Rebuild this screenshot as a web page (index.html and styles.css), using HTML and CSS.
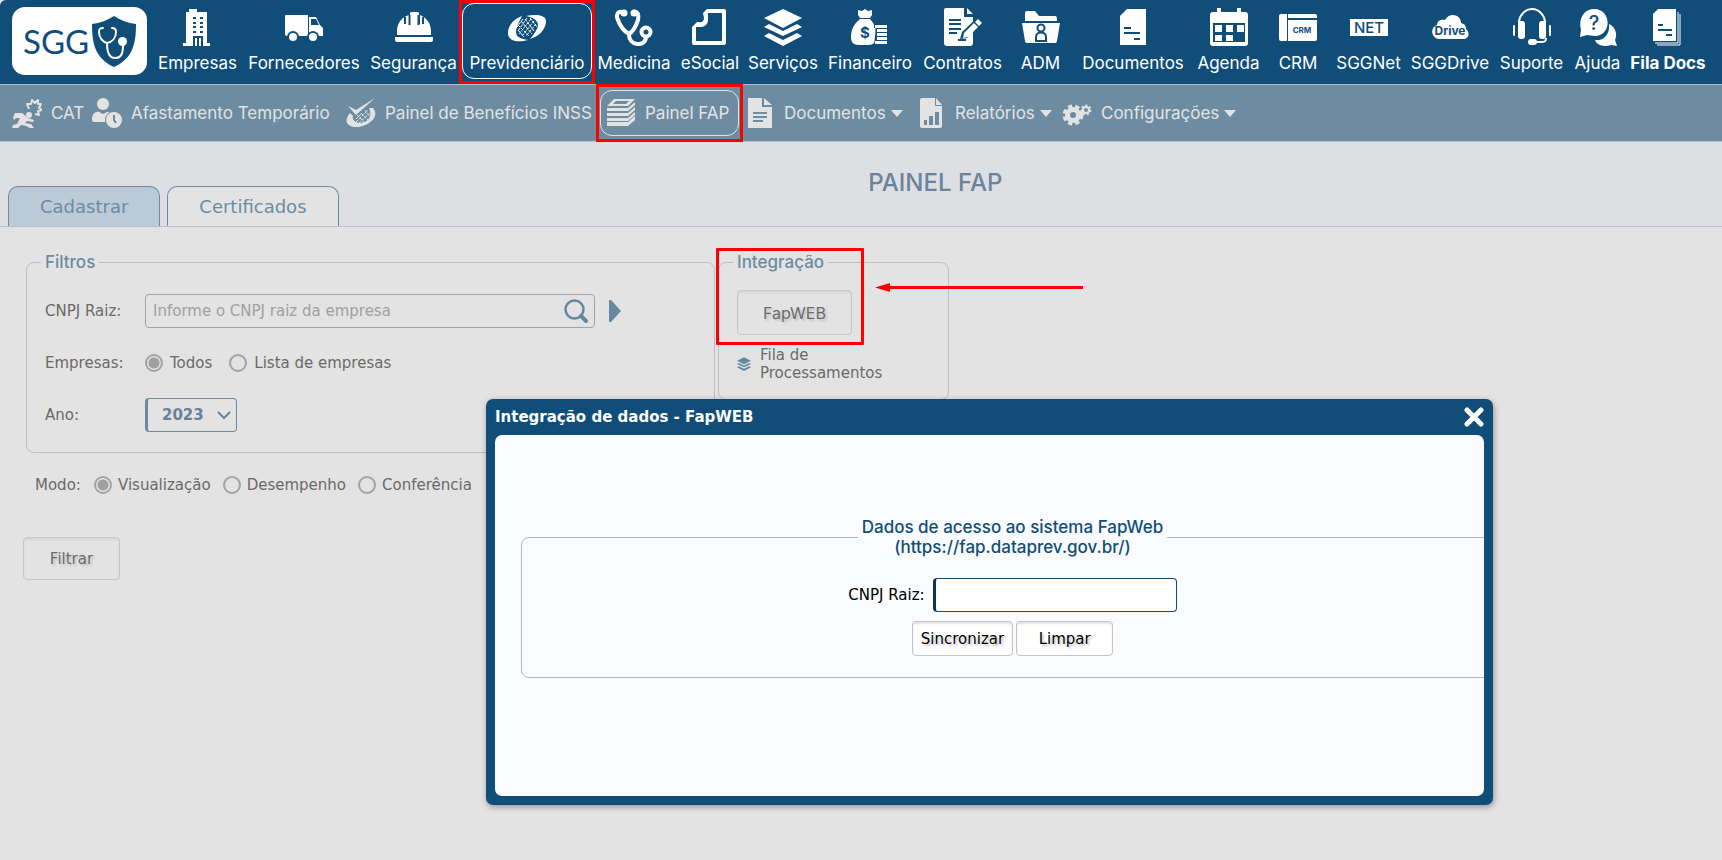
FILE: index.html
```
<!DOCTYPE html>
<html lang="pt-BR">
<head>
<meta charset="utf-8">
<meta name="viewport" content="width=device-width, initial-scale=1">
<title>SGG - Painel FAP</title>
<link rel="stylesheet" href="styles.css">
</head>
<body>
<header class="topbar">
  <a class="logo" href="#" aria-label="SGG">
    <span class="logo-text">SGG</span>
    <svg class="logo-shield" viewBox="0 0 44 51" aria-hidden="true">
      <path fill="#104e79" d="M22 0C16 4 8 7 0 8c0 12 1 20 5 28 4 7 10 12 17 15 7-3 13-8 17-15 4-8 5-16 5-28C36 7 28 4 22 0z"/>
      <path fill="none" stroke="#fff" stroke-width="2" stroke-linecap="round" d="M11 12c-4 0-4 2-4 4 0 6 4 10 8 11 5-1 9-5 9-11 0-2-1-4-4-4M15 27c0 9 2 15 8 15s8-4 8-13"/>
      <circle cx="30.500" cy="25.500" r="4.500" fill="#fff"/>
    </svg>
  </a>
  <nav class="mainnav" aria-label="Principal">
    <a href="#"><svg viewBox="0 0 38 38"><path d="M10 4V1h8v3h10v31h3v3H4v-3h3V4z"/><g class="cut"><path d="M14 9h3v2h-3zM21 9h3v2h-3zM14 14h3v2h-3zM21 14h3v2h-3zM14 18h3v2h-3zM21 18h3v2h-3zM14 23h3v2h-3zM21 23h3v2h-3zM14 28h10v10h-2v-8h-2v8h-2v-8h-2v8h-2z"/></g></svg>Empresas</a>
    <a href="#"><svg viewBox="0 0 38 38"><path d="M0 8q0-1 1-1h22v21H2q-2 0-2-2zM24 9h7l4 8 3 3v8H24z"/><path class="cut" d="M26 11h5l3 6h-8z"/><circle class="cut" cx="8" cy="29" r="6"/><circle class="cut" cx="28" cy="29" r="6"/><circle cx="8" cy="29" r="4"/><circle cx="28" cy="29" r="4"/></svg>Fornecedores</a>
    <a href="#"><svg viewBox="0 0 38 38"><path d="M2 27V23C2 15 7 9 14 7v9h1V5q0-1 2-1h5q2 0 2 1v11h1V7c7 3 11 9 11 16v4zM0 29h38v3q0 2-2 2H2q-2 0-2-2z"/><path class="cut-line" d="M10 9v7M14.500 7v10M23.500 7v10M28 9v7"/></svg>Segurança</a>
    <a href="#" class="current"><svg viewBox="0 0 38 38"><path d="M14 8C6 11 0 17 0 25c0 8 9 10 20 7-7-1-12-3-12-8 0-4 3-10 6-16zM18 8c10-2 20-1 20 5 0 9-8 16-16 18 4-5 8-10 8-14 0-5-6-8-12-9z"/><path class="checks" d="M15 11 9 19M19 10 10 23M23 11 11 26M26 13 14 28M28 16 18 28M13 13 24 26M10 17l11 11M10 22l6 7M17 11l9 12M22 10l7 9"/></svg>Previdenciário</a>
    <a href="#"><svg viewBox="0 0 38 38"><path class="line" d="M7 4C2 3 1 8 3 12c2 6 6 11 11 14 5-3 7-8 9-14 1-5 0-9-5-8M14 25c-1 14 17 14 17 4"/><circle class="line" cx="31" cy="24" r="4.500"/><circle cx="9" cy="5" r="3.500"/><circle cx="19" cy="5" r="3.500"/></svg>Medicina</a>
    <a href="#"><svg viewBox="0 0 38 38"><path fill-rule="evenodd" d="M16 1h17q2 0 2 2v32q0 2-2 2H3q-2 0-2-2V19l5-5h2c3 1 5-1 5-4l-1-5zM17 5v7c0 4-3 7-7 7H5v14h26V5z"/></svg>eSocial</a>
    <a href="#"><svg viewBox="0 0 38 38"><path d="M19 1l19 9-19 10L0 10zM0 19l5-3 14 7 14-7 5 3-19 9zM0 28l5-3 14 7 14-7 5 3-19 10z"/></svg>Serviços</a>
    <a href="#"><svg viewBox="0 0 38 38"><path d="M7 2l4 1 3-2 3 2 4-1v5l-2 3H9L7 7zM9 11h10c5 5 6 10 6 17 0 6-2 9-8 9H8c-6 0-8-3-8-8 0-8 3-13 9-18z"/><text class="cut" x="14" y="30" text-anchor="middle" font-size="15">$</text><path class="cut" d="M23 16h14v4H23zM25 20h12v17H23z"/><path d="M24 17h12v3H24zM26 21h10v3H26zM26 25h10v3H26zM26 29h10v3H26zM24 33h12v3H24z"/></svg>Financeiro</a>
    <a href="#"><svg viewBox="0 0 38 38"><path d="M2 0h18v9h9v26q0 3-3 3H3q-3 0-3-3V2q0-2 2-2zM23 0l6 6h-6z"/><path class="cut-line" d="M5 12h12M5 16h12M5 21h12M5 25h8M14 32h8"/><path class="cut" d="M34 9l5 4-16 17-7 1 2-7z"/><path d="M34 11l4 4-3 3-4-4zM30 15l4 4-10 10-5 1 1-5z"/></svg>Contratos</a>
    <a href="#"><svg viewBox="0 0 38 38"><path d="M3 13V5q0-2 2-2h8l4 5h16q2 0 2 3v2zM0 15h38l-3 18q0 2-3 2H6q-3 0-3-2z"/><circle class="cut-line" cx="19" cy="20" r="3.500"/><path class="cut-line" d="M14 33v-4c0-6 10-6 10 0v4z"/></svg>ADM</a>
    <a href="#"><svg viewBox="0 0 38 38"><path d="M13 1h19v36H6V8z"/><path class="cut-line" d="M10 20h7M10 25h16M20 31h6"/></svg>Documentos</a>
    <a href="#"><svg viewBox="0 0 38 38"><path d="M3 4h4V0h4v4h16V0h4v4h4q3 0 3 3v28q0 3-3 3H3q-3 0-3-3V7q0-3 3-3z"/><path class="cut" d="M3 15h32v19H3z"/><path d="M5 17h7v7H5zM16 17h7v7h-7zM27 17h7v7h-7zM5 27h7v6H5zM16 27h7v6h-7z"/></svg>Agenda</a>
    <a href="#"><svg viewBox="0 0 38 38"><path d="M2 6h6v27H2q-2 0-2-2V8q0-2 2-2zM9 6h27q2 0 2 2v2H9zM9 12h29v19q0 2-2 2H9z"/><text class="cut" x="23" y="25" text-anchor="middle" font-size="8">CRM</text></svg>CRM</a>
    <a href="#"><svg viewBox="0 0 38 38"><path d="M0 11h38v17H0z"/><text class="cut light" x="19" y="25" text-anchor="middle" font-size="15">NET</text></svg>SGGNet</a>
    <a href="#"><svg viewBox="0 0 38 38"><path d="M8 31c-7 0-10-11-2-14 0-5 5-6 8-5 4-8 16-6 16 3 4 1 5 3 5 6 5 5 2 10-3 10z"/><text class="cut" x="19" y="27" text-anchor="middle" font-size="12">Drive</text></svg>SGGDrive</a>
    <a href="#"><svg viewBox="0 0 38 38"><path class="thin" d="M6 18v-4C6 9 11 1 19 1s13 8 13 13v4M33 30c0 4-2 4-5 4h-9"/><rect x="5" y="13" width="7" height="18" rx="3"/><rect x="26" y="13" width="7" height="18" rx="3"/><rect x="0" y="17" width="2" height="11" rx="1"/><rect x="36" y="17" width="2" height="11" rx="1"/><rect x="15" y="31" width="9" height="6" rx="3"/></svg>Suporte</a>
    <a href="#"><svg viewBox="0 0 38 38"><path d="M30 16c8 4 8 12 6 16l2 6-6-1c-6 2-14 1-16-5 9 1 15-6 14-16z"/><path d="M1 29l1-7C-1 11 5 1 15 1c18 0 18 27 1 27-3 0-6-1-8-1z"/><text class="cut light" x="15" y="22" text-anchor="middle" font-size="20">?</text></svg>Ajuda</a>
    <a href="#" class="strong"><svg viewBox="0 0 38 38"><path d="M9 1h18v32H4V6z"/><path class="hair" d="M6 35h23V4M8 37h23V6"/><path class="cut-line" d="M9 17h5M9 22h14M17 27h6"/></svg>Fila Docs</a>
  </nav>
</header>

<nav class="subnav" aria-label="Previdenciário">
  <a href="#"><svg viewBox="0 0 30 30"><circle cx="17" cy="17" r="3"/><path d="M3 15l7 0 6 5 6 2-1 2-6-1-2 2 6 1 3 4h-4l-4-2-5-1-3 3H0l1-3 4-1 3-6-4 0-2 2-1-2z"/><path class="burst" d="M17 11l-2-5 4 0 1-4 3 3 3-3 0 4 3 0-2 4 3 2-4 1 1 4-4-1"/></svg><span>CAT</span></a>
  <a href="#"><svg viewBox="0 0 30 30"><circle cx="11" cy="6" r="6"/><path d="M0 22c0-5 2-9 7-8l4 2 4-2c3 0 4 1 4 2l1 8H2q-2 0-2-2z"/><circle class="cut" cx="22" cy="22" r="9"/><circle cx="22" cy="22" r="8"/><path class="cut-line" d="M22 17v5l2 3"/></svg><span>Afastamento Temporário</span></a>
  <a href="#"><svg viewBox="0 0 30 30"><path d="M2 8l8 4L29 0 10 17zM4 15c-7 8-3 15 9 14C27 26 33 17 27 10l-4 0c4 8-1 15-10 15-5-1-7-4-6-7z"/><path class="checks" d="M10 21l6-6M10 24l12-12M13 25l12-11M11 17l8 8M15 15l7 7M19 12l5 7"/></svg><span>Painel de Benefícios INSS</span></a>
  <a href="#" class="current"><svg viewBox="0 0 30 30"><path d="M8 1h21l-7 7H1zM1 10h21l7-6v3l-7 6H1zM1 15h21l7-6v3l-7 6H1zM1 20h21l7-6v3l-7 6H1zM1 24h21l7-6v4l-7 6H1z"/><path class="cut" d="M10 3h13l-3 3H7z"/></svg><span>Painel FAP</span></a>
  <a href="#"><svg viewBox="0 0 30 30"><path d="M3 0h14v9h10v21H3zM19 0l8 7h-8z"/><path class="cut-line" d="M8 15h14M8 19h14M8 23h10"/></svg><span>Documentos</span><i class="caret"></i></a>
  <a href="#"><svg viewBox="0 0 30 30"><path d="M6 0h13v8h7v20q0 2-2 2H6q-2 0-2-2V2q0-2 2-2zM20 0l6 7h-6z"/><path class="cut" d="M8 22h3v5H8zM13 18h4v9h-4zM19 14h4v13h-4z"/></svg><span>Relatórios</span><i class="caret"></i></a>
  <a href="#"><svg viewBox="0 0 30 30"><circle class="gear" cx="11" cy="17" r="5.500"/><circle class="teeth" cx="11" cy="17" r="8.500"/><circle class="gear small" cx="24" cy="12" r="3"/><circle class="teeth small" cx="24" cy="12" r="4.500"/></svg><span>Configurações</span><i class="caret"></i></a>
</nav>

<main>
  <div class="titlebar">
    <div class="tabs" role="tablist">
      <button type="button" role="tab" class="tab selected" aria-selected="true">Cadastrar</button>
      <button type="button" role="tab" class="tab" aria-selected="false">Certificados</button>
    </div>
    <h1>PAINEL FAP</h1>
  </div>

  <form class="filters">
    <div class="panels">
      <fieldset class="panel filter-panel">
        <legend>Filtros</legend>
        <div class="row">
          <label class="name" for="cnpj">CNPJ Raiz:</label>
          <div class="search">
            <input id="cnpj" type="text" placeholder="Informe o CNPJ raiz da empresa">
            <button type="button" aria-label="Pesquisar"><svg viewBox="0 0 24 24"><circle cx="10.500" cy="10.500" r="9" fill="none" stroke="#6488a0" stroke-width="2.500"/><path d="M17 17l5 5" stroke="#6488a0" stroke-width="4" stroke-linecap="round"/></svg></button>
          </div>
          <button type="button" class="next" aria-label="Avançar"><svg viewBox="0 0 12 22"><path d="M0 0h2l10 11L2 22H0z" fill="#6488a0"/></svg></button>
        </div>
        <div class="row">
          <span class="name">Empresas:</span>
          <label class="option"><input type="radio" name="empresas" checked>Todos</label>
          <label class="option"><input type="radio" name="empresas">Lista de empresas</label>
        </div>
        <div class="row">
          <label class="name" for="ano">Ano:</label>
          <div class="select">
            <select id="ano"><option>2023</option></select>
            <svg viewBox="0 0 14 9" aria-hidden="true"><path d="M1 1l6 6 6-6" fill="none" stroke="#6a849a" stroke-width="2"/></svg>
          </div>
        </div>
      </fieldset>

      <fieldset class="panel integration">
        <legend>Integração</legend>
        <button type="button" class="btn large">FapWEB</button>
        <a href="#" class="queue">
          <svg viewBox="0 0 38 38" aria-hidden="true"><path d="M19 1l19 9-19 10L0 10zM0 19l5-3 14 7 14-7 5 3-19 9zM0 28l5-3 14 7 14-7 5 3-19 10z"/></svg>
          <span>Fila de Processamentos</span>
        </a>
        <div class="mark" aria-hidden="true"></div>
        <svg class="arrow" viewBox="0 0 208 9" aria-hidden="true"><path fill="#f00" d="M0 4.500L15 0v3h193v3H15v3z"/></svg>
      </fieldset>
    </div>

    <div class="mode">
      <span>Modo:</span>
      <label class="option"><input type="radio" name="modo" checked>Visualização</label>
      <label class="option"><input type="radio" name="modo">Desempenho</label>
      <label class="option"><input type="radio" name="modo">Conferência</label>
    </div>
    <button type="button" class="btn">Filtrar</button>
  </form>
</main>

<section class="dialog" role="dialog" aria-labelledby="dialog-title">
  <div class="dialog-head">
    <h2 id="dialog-title">Integração de dados - FapWEB</h2>
    <button type="button" aria-label="Fechar"><svg viewBox="0 0 20 20"><path d="M3 3l14 14M17 3L3 17" stroke="#fff" stroke-width="5" stroke-linecap="round"/></svg></button>
  </div>
  <div class="dialog-body">
    <fieldset class="access">
      <legend>Dados de acesso ao sistema FapWeb<br>(https://fap.dataprev.gov.br/)</legend>
      <div class="field"><label for="raiz">CNPJ Raiz:</label><input id="raiz" type="text"></div>
      <div class="actions"><button type="button" class="btn bright">Sincronizar</button><button type="button" class="btn bright">Limpar</button></div>
    </fieldset>
  </div>
</section>
</body>
</html>
```
FILE: styles.css
```
* { box-sizing: border-box; }

body {
  margin: 0;
  min-height: 100vh;
  position: relative;
  background: #e3e3e3;
  color: #6a6a6a;
  font: 15px/18px "DejaVu Sans", sans-serif;
}

a { color: inherit; text-decoration: none; }
button, input, select { font: inherit; color: inherit; margin: 0; }
svg { display: block; flex: none; }

/* Top bar */
.topbar {
  display: flex;
  align-items: flex-start;
  height: 84px;
  padding: 0 12px;
  background: #104e79;
  border-top-left-radius: 6px;
  color: #fff;
}

.logo {
  display: flex;
  align-items: center;
  gap: 3px;
  flex: none;
  width: 135px;
  height: 68px;
  margin: 7px 5px 0 0;
  padding-left: 11px;
  border-radius: 13px;
  background: #fff;
  color: #104e79;
}
.logo-text { font: 33px/40px Lato, sans-serif; }
.logo-shield { width: 44px; height: 51px; }

.mainnav {
  flex: 1;
  display: grid;
  grid-template-columns: 91fr 122fr 97fr 130fr 84fr 68fr 78fr 96fr 89fr 67fr 118fr 73fr 66fr 75fr 88fr 75fr 57fr 84fr;
  font: 17px/22px Inter, sans-serif;
}
.mainnav a {
  position: relative;
  display: flex;
  flex-direction: column;
  align-items: center;
  gap: 6px;
  min-width: 0;
  height: 84px;
  padding-top: 8px;
  white-space: nowrap;
}
.mainnav svg { width: 38px; height: 38px; fill: #fff; }
.mainnav .cut { fill: #104e79; }
.mainnav text { font-family: Inter, sans-serif; font-weight: 700; }
.mainnav text.light { font-weight: 500; }
.cut-line { fill: none; stroke: #104e79; stroke-width: 2; }
.mainnav .line { fill: none; stroke: #fff; stroke-width: 4; }
.mainnav .thin { fill: none; stroke: #fff; stroke-width: 2; }
.mainnav .hair { fill: none; stroke: #fff; stroke-width: 1; }
.checks { fill: none; stroke: #fff; stroke-width: 1; stroke-dasharray: 3 1; }
.mainnav .strong { font-weight: 700; }

.current { position: relative; }
.current::before,
.current::after { content: ""; position: absolute; }
.current::before { border: 1px solid #fff; border-radius: 12px; }
.current::after { border: 3px solid #f00; z-index: 1; }
.mainnav .current::before { inset: 3px 0 5px; }
.mainnav .current::after { inset: 0 -3px; }

/* Module bar */
.subnav {
  display: grid;
  grid-template-columns: 80fr 254fr 260fr 139fr 171fr 146fr 185fr 481fr;
  height: 58px;
  padding-left: 6px;
  border-top: 1px solid #a9bdcb;
  border-bottom: 1px solid #b4c2cf;
  background: #6d8ca1;
  color: #e3e3e3;
  font: 17px/22px Inter, sans-serif;
}
.subnav a {
  display: flex;
  align-items: center;
  min-width: 0;
  padding-left: 6px;
  white-space: nowrap;
}
.subnav svg { width: 30px; height: 30px; margin-right: 9px; fill: #e3e3e3; }
.subnav .cut { fill: #6d8ca1; }
.subnav .cut-line { stroke: #6d8ca1; }
.subnav .checks { stroke: #e3e3e3; }
.subnav .current::before { inset: 5px 0; border-color: #e3e3e3; }
.subnav .current::after { inset: -1px -4px; }
.burst { fill: none; stroke: #e3e3e3; stroke-width: 2; stroke-linejoin: round; }
.gear, .teeth { fill: none; stroke: #e3e3e3; stroke-width: 5; }
.teeth { stroke-width: 4; stroke-dasharray: 4 3; }
.gear.small { stroke-width: 2; }
.teeth.small { stroke-width: 2; stroke-dasharray: 2 2; }
.caret {
  margin-left: 5px;
  border: 6px solid transparent;
  border-top: 7px solid #e3e3e3;
  border-bottom: 0;
}

/* Title and tabs */
.titlebar {
  display: flex;
  align-items: flex-end;
  height: 85px;
  padding-left: 8px;
  border-bottom: 1px solid #bdbdc9;
  background: #dedfe3;
}
.tabs { display: flex; gap: 7px; }
.tab {
  height: 40px;
  padding: 0 31px;
  border: 1px solid #6a8ca3;
  border-bottom: 0;
  border-radius: 10px 10px 0 0;
  background: #e3e3e3;
  color: #6a8ca3;
  font-size: 18px;
}
.tab.selected { background: #bccad8; }
h1 {
  flex: 1;
  align-self: flex-start;
  margin: 0;
  padding: 27px 190px 0 0;
  text-align: center;
  color: #6a849d;
  font: 500 24px/28px Inter, sans-serif;
}

/* Filters */
.filters { padding: 24px 23px; }
.panels { display: flex; align-items: flex-start; gap: 3px; }
.panel {
  position: relative;
  margin: 0 0 0 3px;
  border: 1px solid #bdbdc9;
  border-radius: 8px;
}
.panel legend {
  padding: 0 4px;
  color: #6a8ca3;
  font: 500 17px/22px Inter, sans-serif;
}
.filter-panel { width: 689px; padding: 21px 18px 20px 14px; }
.row { display: flex; align-items: center; height: 34px; margin-bottom: 18px; padding-left: 4px; }
.row:last-child { margin-bottom: 0; }
.name { width: 100px; }
.integration { width: 231px; padding: 17px 19px 17px 14px; margin-left: 0; }

.search { position: relative; width: 450px; }
.search input {
  width: 100%;
  height: 34px;
  padding: 0 40px 0 7px;
  border: 1px solid #a3a3a3;
  border-radius: 4px;
  background: transparent;
}
.search input::placeholder { color: #a0a0a0; opacity: 1; }
.search button { position: absolute; right: 7px; top: 5px; }
.search button, .next, .dialog-head button { padding: 0; border: 0; background: none; }
.search svg { width: 24px; height: 24px; }
.next { margin-left: 14px; }
.next svg { width: 12px; height: 22px; }

.option { display: flex; align-items: center; gap: 7px; margin-right: 17px; }
.option input {
  appearance: none;
  width: 18px;
  height: 18px;
  border: 2px solid #a3a3a3;
  border-radius: 50%;
  background: transparent;
}
.option input:checked { background: radial-gradient(circle, #a0a0a0 5px, transparent 6px); }

.select { position: relative; }
.select select {
  appearance: none;
  width: 92px;
  height: 34px;
  padding: 0 0 0 14px;
  border: 1px solid #6a8ca3;
  border-left-width: 3px;
  border-radius: 4px;
  background: transparent;
  color: #6a7f98;
  font-weight: 700;
}
.select svg { position: absolute; right: 6px; top: 13px; width: 14px; height: 9px; pointer-events: none; }

.btn {
  min-width: 97px;
  height: 43px;
  padding: 0 8px;
  border: 1px solid #c6c6c6;
  border-radius: 4px;
  background: transparent;
  box-shadow: inset 0 2px 2px #d6d6d6;
  text-shadow: 2px 2px 2px #c4c4c4;
}
.btn.large { width: 115px; height: 45px; margin-left: 4px; font: 16px/20px Inter, sans-serif; }
.queue { display: flex; align-items: center; gap: 9px; width: 160px; margin: 11px 0 0 4px; }
.queue svg { width: 14px; height: 14px; fill: #6488a0; }

.mark { position: absolute; left: -3px; top: -25px; width: 148px; height: 97px; border: 3px solid #f00; border-radius: 1px; }
.arrow { position: absolute; left: 156px; top: 10px; width: 208px; height: 9px; }

.mode { display: flex; align-items: center; margin: 23px 0 43px 12px; }
.mode > span { width: 59px; }
.mode .option { gap: 6px; margin-right: 12px; }

/* Dialog */
.dialog {
  position: absolute;
  left: 486px;
  right: 229px;
  top: 399px;
  padding: 0 9px 9px;
  border-radius: 7px;
  background: #104e79;
  box-shadow: 1px 2px 6px rgba(0, 0, 0, .35);
  color: #000;
}
.dialog-head { display: flex; justify-content: space-between; align-items: center; height: 36px; }
.dialog-head h2 { margin: 0; color: #fff; font: 700 15px/20px "DejaVu Sans", sans-serif; }
.dialog-head svg { width: 20px; height: 20px; }
.dialog-body {
  overflow: hidden;
  padding: 82px 0 118px 26px;
  border-radius: 7px;
  background: #fafbfd;
}
.access {
  width: calc(100% + 20px);
  margin: 0;
  padding: 21px 0;
  border: 1px solid #b3b3c9;
  border-radius: 8px;
}
.access legend {
  margin: 0 auto;
  padding: 0 4px;
  text-align: center;
  color: #104e79;
  font: 500 17px/20px Inter, sans-serif;
}
.field, .actions { display: flex; justify-content: center; align-items: center; }
.field { gap: 8px; margin-bottom: 9px; }
.field input {
  width: 244px;
  height: 34px;
  border: 1px solid #104e79;
  border-left: 3px solid #0a3560;
  border-radius: 4px;
  background: #fff;
}
.actions { gap: 3px; }
.btn.bright {
  height: 35px;
  background: #fff;
  border-color: #c4c4c8;
  box-shadow: inset 0 2px 2px #e4e4e4;
  text-shadow: 2px 2px 2px #c8c8c8;
}
```
